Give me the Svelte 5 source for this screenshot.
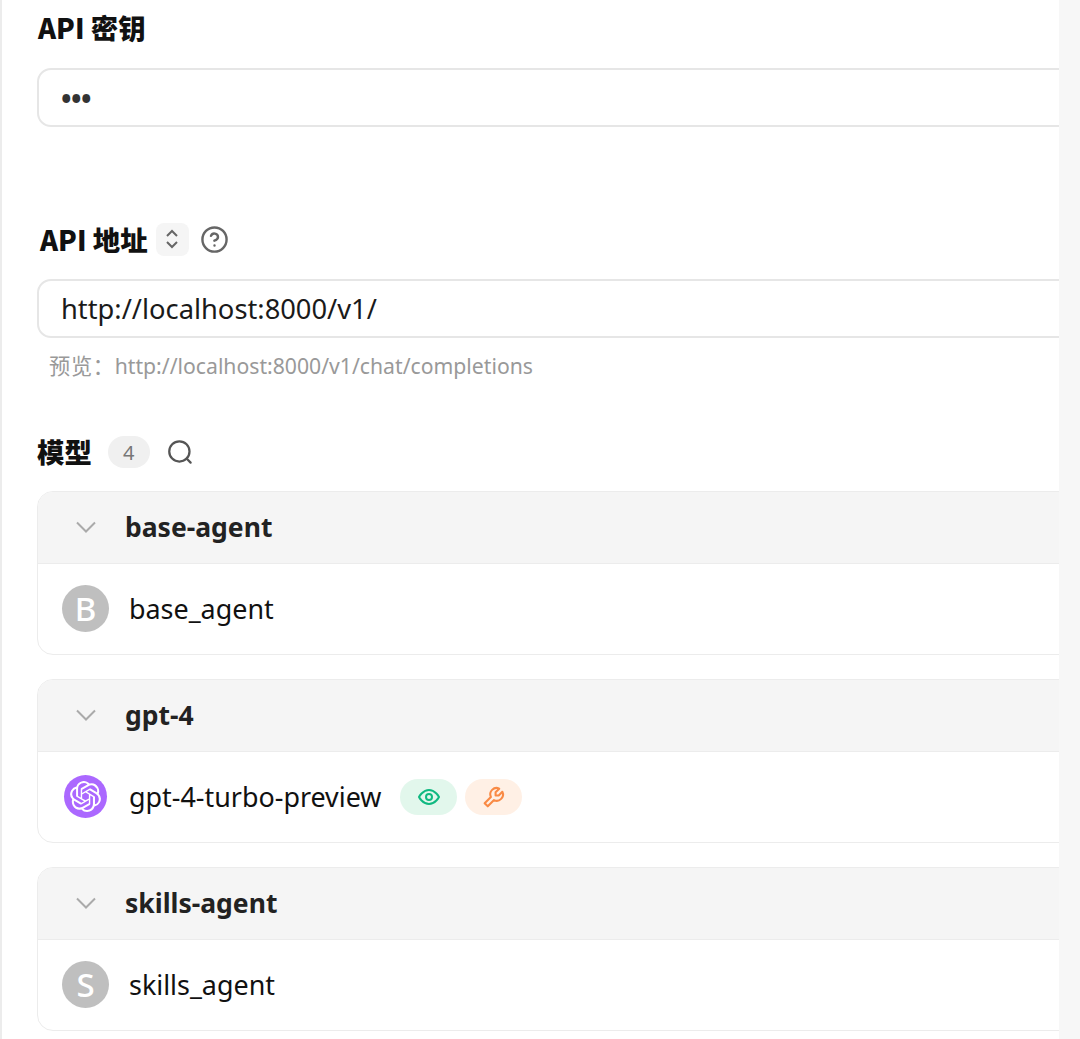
<script lang="ts">
  const gpt = 'M22.2819 9.8211a5.9847 5.9847 0 0 0-.5157-4.9108 6.0462 6.0462 0 0 0-6.5098-2.9A6.0651 6.0651 0 0 0 4.9807 4.1818a5.9847 5.9847 0 0 0-3.9977 2.9 6.0462 6.0462 0 0 0 .7427 7.0966 5.98 5.98 0 0 0 .511 4.9107 6.051 6.051 0 0 0 6.5146 2.9001A5.9847 5.9847 0 0 0 13.2599 24a6.0557 6.0557 0 0 0 5.7718-4.2058 5.9894 5.9894 0 0 0 3.9977-2.9001 6.0557 6.0557 0 0 0-.7475-7.0729zm-9.022 12.6081a4.4755 4.4755 0 0 1-2.8764-1.0408l.1419-.0804 4.7783-2.7582a.7948.7948 0 0 0 .3927-.6813v-6.7369l2.02 1.1686a.071.071 0 0 1 .038.052v5.5826a4.504 4.504 0 0 1-4.4945 4.4944zm-9.6607-4.1254a4.4708 4.4708 0 0 1-.5346-3.0137l.142.0852 4.783 2.7582a.7712.7712 0 0 0 .7806 0l5.8428-3.3685v2.3324a.0804.0804 0 0 1-.0332.0615L9.74 19.9502a4.4992 4.4992 0 0 1-6.1408-1.6464zM2.3408 7.8956a4.485 4.485 0 0 1 2.3655-1.9728V11.6a.7664.7664 0 0 0 .3879.6765l5.8144 3.3543-2.0201 1.1685a.0757.0757 0 0 1-.071 0l-4.8303-2.7865A4.504 4.504 0 0 1 2.3408 7.872zm16.5963 3.8558L13.1038 8.364 15.1192 7.2a.0757.0757 0 0 1 .071 0l4.8303 2.7913a4.4944 4.4944 0 0 1-.6765 8.1042v-5.6772a.79.79 0 0 0-.407-.667zm2.0107-3.0231l-.142-.0852-4.7735-2.7818a.7759.7759 0 0 0-.7854 0L9.409 9.2297V6.8974a.0662.0662 0 0 1 .0284-.0615l4.8303-2.7866a4.4992 4.4992 0 0 1 6.6802 4.66zM8.3065 12.863l-2.02-1.1638a.0804.0804 0 0 1-.038-.0567V6.0742a4.4992 4.4992 0 0 1 7.3757-3.4537l-.142.0805L8.704 5.459a.7948.7948 0 0 0-.3927.6813zm1.0976-2.3654l2.602-1.4998 2.6069 1.4998v2.9994l-2.5974 1.4997-2.6067-1.4997Z';

  const groups = [
    { name: 'base-agent', model: 'base_agent', letter: 'B' },
    { name: 'gpt-4', model: 'gpt-4-turbo-preview', logo: true },
    { name: 'skills-agent', model: 'skills_agent', letter: 'S' }
  ];
</script>

<div class="page">
  <main class="panel">
    <div class="content">
      <h3 class="label key-label">API 密钥</h3>
      <div class="field"><span class="dots">•••</span></div>

      <div class="label-row addr-row">
        <h3 class="label">API 地址</h3>
        <span class="sort">
          <svg viewBox="0 0 24 24" width="24" height="24"><path d="m7 15 5 5 5-5M7 9l5-5 5 5" /></svg>
        </span>
        <svg class="help" viewBox="0 0 24 24" width="29" height="29">
          <circle cx="12" cy="12" r="10" />
          <path d="M9.1 9a3 3 0 0 1 5.8 1c0 2-3 3-3 3M12 17h.01" />
        </svg>
      </div>
      <div class="field url">http://localhost:8000/v1/</div>
      <p class="preview"><span class="prefix">预览：</span>http://localhost:8000/v1/chat/completions</p>

      <div class="label-row models-row">
        <h3 class="label">模型</h3>
        <span class="count">4</span>
        <svg class="search" viewBox="0 0 24 24" width="27" height="27">
          <circle cx="11" cy="11" r="9" />
          <path d="m21 21-3.6-3.6" />
        </svg>
      </div>

      {#each groups as g}
        <section class="group">
          <header class="group-head">
            <svg class="chev" viewBox="0 0 20 12" width="20" height="12"><path d="m1 1.5 9 9 9-9" /></svg>
            <span class="group-name">{g.name}</span>
          </header>
          <div class="model">
            {#if g.logo}
              <span class="avatar-box">
                <span class="avatar logo">
                  <svg viewBox="0 0 24 24" width="31" height="31"><path d={gpt} /></svg>
                </span>
              </span>
            {:else}
              <span class="avatar">{g.letter}</span>
            {/if}
            <span class="model-name">{g.model}</span>
            {#if g.logo}
              <span class="pill eye">
                <svg viewBox="0 0 24 24" width="24" height="24">
                  <path d="M2 12s3.6-7 10-7 10 7 10 7-3.6 7-10 7-10-7-10-7Z" />
                  <circle cx="12" cy="12" r="3" />
                </svg>
              </span>
              <span class="pill tool">
                <svg viewBox="0 0 24 24" width="25" height="25">
                  <path d="M17 10h-3V7l3.5-3.5a6 6 0 0 0-8 8l-6 6 3 3 6-6a6 6 0 0 0 8-8L17 10" />
                </svg>
              </span>
            {/if}
          </div>
        </section>
      {/each}
    </div>
  </main>
  <aside class="rail"></aside>
</div>

<style>
  :global(body) {
    background: #fff;
  }
  .page {
    display: flex;
    height: 1039px;
    overflow: hidden;
    font-family: "Noto Sans", "Noto Sans CJK SC", sans-serif;
    color: #1a1a1a;
  }
  .panel {
    width: 1059px;
    flex-shrink: 0;
    overflow: hidden;
    box-sizing: border-box;
    border-left: 2px solid #ececec;
  }
  .content {
    width: 1100px;
    padding: 0 0 0 35px;
  }
  .rail {
    flex: 1;
    background: #f7f7f7;
  }
  .label {
    margin: 0;
    font-size: 27.4px;
    line-height: 38px;
    font-weight: 900;
    color: #111;
    font-family: "Noto Sans CJK SC", sans-serif;
  }
  .key-label {
    padding: 8px 0 22px 1px;
  }
  .label-row {
    display: flex;
    align-items: center;
  }
  .addr-row {
    margin-top: 93px;
    margin-bottom: 21px;
    padding-left: 3px;
    height: 38px;
  }
  .field {
    height: 59px;
    box-sizing: border-box;
    border: 2px solid #e6e6e6;
    border-radius: 14px;
    padding: 0 22px;
    display: flex;
    align-items: center;
    color: #1a1a1a;
  }
  .url {
    font-size: 27.3px;
  }
  .dots {
    font-size: 28px;
    font-weight: 700;
    letter-spacing: -0.5px;
    color: #333;
  }
  .sort {
    width: 33px;
    height: 33px;
    margin-left: 8px;
    border-radius: 8px;
    background: #f5f5f5;
    display: flex;
    align-items: center;
    justify-content: center;
  }
  .sort svg {
    fill: none;
    stroke: #666;
    stroke-width: 2;
  }
  .help {
    margin-left: 11px;
    fill: none;
    stroke: #666;
    stroke-width: 2;
    stroke-linecap: round;
    stroke-linejoin: round;
  }
  .preview {
    margin: 13px 0 0 12px;
    font-size: 21.2px;
    line-height: 30px;
    color: #999;
  }
  .prefix {
    letter-spacing: 0.7px;
  }
  .models-row {
    margin-top: 55px;
    margin-bottom: 23px;
    height: 32px;
  }
  .models-row .label {
    padding-bottom: 2px;
  }
  .count {
    margin-left: 16px;
    width: 42px;
    height: 32px;
    border-radius: 16px;
    background: #f0f0f0;
    color: #777;
    font-size: 20px;
    display: flex;
    align-items: center;
    justify-content: center;
  }
  .search {
    margin-left: 17px;
    fill: none;
    stroke: #555;
    stroke-width: 2;
    stroke-linecap: round;
  }
  .group {
    box-sizing: border-box;
    height: 164px;
    margin-bottom: 24px;
    border: 1.5px solid #ececec;
    border-radius: 16px;
    overflow: hidden;
  }
  .group-head {
    height: 72px;
    box-sizing: border-box;
    background: #f5f5f5;
    border-bottom: 1.5px solid #ececec;
    display: flex;
    align-items: center;
    padding-left: 38px;
  }
  .chev {
    fill: none;
    stroke: #aaa;
    stroke-width: 2;
    margin-bottom: 2px;
  }
  .group-name {
    margin-left: 29px;
    padding-bottom: 2px;
    font-size: 26.5px;
    font-weight: 700;
    color: #222;
  }
  .model {
    height: 90px;
    box-sizing: border-box;
    padding: 0 0 2px 24px;
    display: flex;
    align-items: center;
  }
  .avatar {
    width: 47px;
    height: 47px;
    flex-shrink: 0;
    border-radius: 50%;
    background: #bfbfbf;
    color: #fff;
    font-size: 33px;
    font-weight: 500;
    display: flex;
    align-items: center;
    justify-content: center;
  }
  .avatar-box {
    width: 47px;
    height: 47px;
    flex-shrink: 0;
    display: flex;
    align-items: center;
    justify-content: center;
  }
  .avatar.logo {
    width: 43px;
    height: 43px;
    background: #ab68ff;
  }
  .avatar.logo svg {
    fill: #fff;
  }
  .model-name {
    margin-left: 20px;
    font-size: 26.9px;
    color: #111;
  }
  .pill {
    width: 57px;
    height: 36px;
    margin-top: 2px;
    border-radius: 18px;
    display: flex;
    align-items: center;
    justify-content: center;
  }
  .pill svg {
    fill: none;
    stroke-width: 2;
    stroke-linecap: round;
    stroke-linejoin: round;
  }
  .eye {
    margin-left: 19px;
    background: #e2f7ec;
  }
  .eye svg {
    stroke: #10b981;
  }
  .tool {
    margin-left: 8px;
    background: #fff0e5;
  }
  .tool svg {
    stroke: #f98a45;
  }
</style>
